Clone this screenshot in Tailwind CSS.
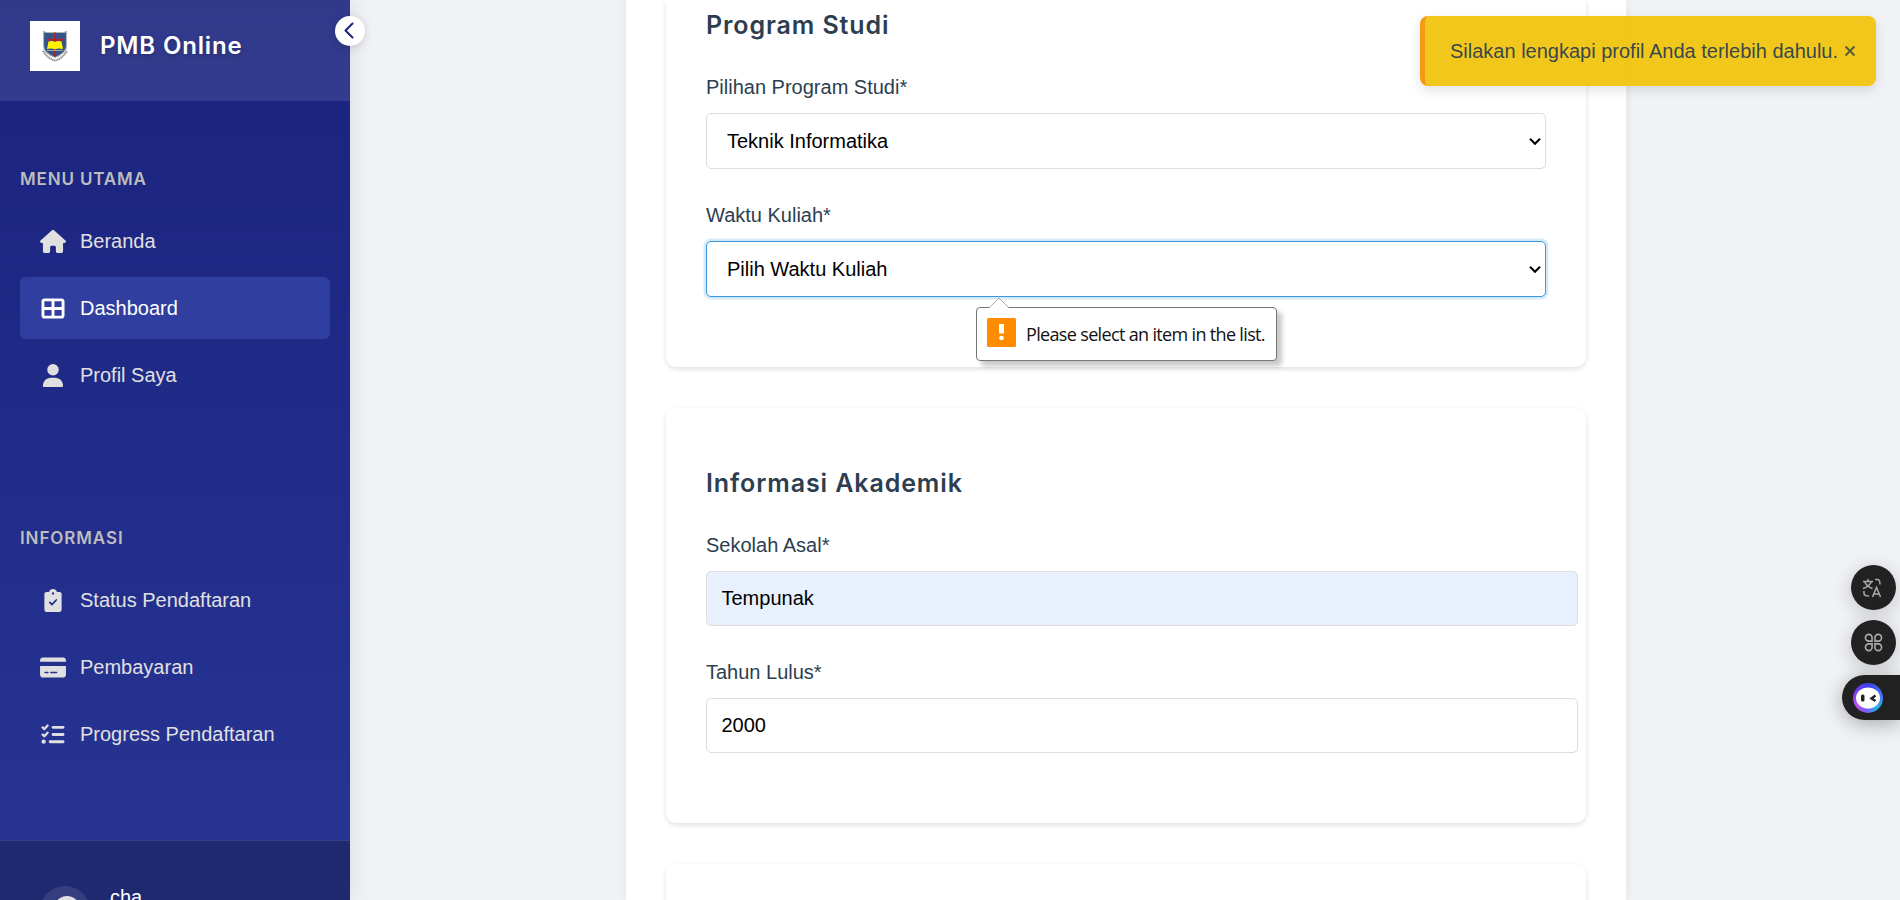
<!DOCTYPE html>
<html lang="id">
<head>
<meta charset="utf-8">
<title>PMB Online</title>
<script src="https://cdn.jsdelivr.net/npm/@tailwindcss/browser@4"></script>
</head>
<body class="relative flex h-[900px] w-[1900px] overflow-hidden bg-[#f0f2f5] font-['Liberation_Sans',Arial,sans-serif] text-[20px] leading-[30px] text-[#2c3e50]">

<aside class="relative z-10 flex h-[900px] w-[350px] shrink-0 flex-col bg-linear-to-b from-[#1a237e] to-[#283593] text-[#e0e0e0] shadow-[4px_0_20px_rgba(0,0,0,0.08)]">
  <div class="flex h-[101px] shrink-0 items-start gap-5 bg-white/10 pl-[30px] pt-[21px]">
    <svg class="size-[50px] shrink-0" viewBox="0 0 50 50">
      <rect width="50" height="50" fill="#fff"/>
      <path d="M13 30q5 8 12 9.500q7-1.500 12-9.500" fill="none" stroke="#888" stroke-width="1.800" stroke-dasharray="1.300 .5"/>
      <path d="M13.500 10.500l3 1h17l3-1v14.500c0 5-5 9-11.500 11.500c-6.500-2.500-11.500-6.500-11.500-11.500z" fill="#34558b" stroke="#b5b8b0" stroke-width="1.200"/>
      <path d="M25 11.500v24M17 18.800h16" stroke="#b3202c" stroke-width="2"/>
      <path d="M18.500 20.500q4-1 6.500.5q2.500-1.500 6.500-.5l1.500 7.500q-5-1-8 .5q-3-1.500-8-.5z" fill="#fff100"/>
      <path d="M17 29.500h16" stroke="#9aa49b" stroke-width="1"/>
    </svg>
    <div class="pt-[8px] font-[Inter] text-[24px] font-semibold leading-[34px] tracking-[0.850px] text-white [text-shadow:0_2px_4px_rgba(0,0,0,0.2)]">PMB Online</div>
  </div>
  <button class="absolute left-[335px] top-4 flex size-[30px] items-center justify-center rounded-full bg-white shadow-[0_2px_8px_rgba(0,0,0,0.15)]">
    <svg class="size-[30px]" viewBox="0 0 30 30" fill="none" stroke="#1a237e" stroke-width="2" stroke-linecap="round" stroke-linejoin="round"><path d="M17.500 7.500L10.500 14.500L17.500 21.500"/></svg>
  </button>

  <nav class="flex flex-col px-5">
    <h3 class="mt-[63px] h-[30px] font-[Inter] text-[17px] font-semibold tracking-[0.850px] text-[#bdbdbd]">MENU UTAMA</h3>
    <ul class="mt-[16px] flex flex-col gap-[5px]">
      <li class="flex h-[62px] items-center gap-[14px] rounded-[6px] pl-5"><svg class="h-[23px] w-[26px]" viewBox="0 0 576 512" fill="currentColor"><path d="M575.8 255.5c0 18-15 32.100-32 32.100h-32l.7 160.200c0 2.700-.2 5.400-.5 8.100V472c0 22.100-17.900 40-40 40H392c-22.100 0-40-17.900-40-40V384c0-17.700-14.300-32-32-32H256c-17.700 0-32 14.300-32 32v88c0 22.100-17.900 40-40 40H104c-22.100 0-40-17.900-40-40V287.600H32c-18 0-32-14-32-32.100c0-9 3-17 10-24L266.400 8c7-7 15-8 22-8s15 2 21 7L564.800 231.500c8 7 12 15 11 24z"/></svg>Beranda</li>
      <li class="flex h-[62px] items-center gap-[14px] rounded-[6px] bg-[#303f9f] pl-5 text-white"><svg class="h-[23px] w-[26px]" viewBox="0 0 512 512" fill="currentColor"><path d="M448 96V224H288V96H448zm0 192V416H288V288H448zM224 224H64V96H224V224zM64 288H224V416H64V288zM64 32C28.700 32 0 60.700 0 96V416c0 35.300 28.700 64 64 64H448c35.300 0 64-28.700 64-64V96c0-35.300-28.700-64-64-64H64z"/></svg>Dashboard</li>
      <li class="flex h-[62px] items-center gap-[14px] rounded-[6px] pl-5"><svg class="h-[23px] w-[26px]" viewBox="0 0 448 512" fill="currentColor"><path d="M224 256A128 128 0 1 0 224 0a128 128 0 1 0 0 256zm-45.700 48C79.800 304 0 383.800 0 482.300C0 498.700 13.300 512 29.700 512H418.300c16.400 0 29.700-13.300 29.700-29.700C448 383.800 368.200 304 269.700 304H178.300z"/></svg>Profil Saya</li>
    </ul>
    <h3 class="mt-[117px] h-[30px] font-[Inter] text-[17px] font-semibold tracking-[0.900px] text-[#bdbdbd]">INFORMASI</h3>
    <ul class="mt-[16px] flex flex-col gap-[5px]">
      <li class="flex h-[62px] items-center gap-[14px] rounded-[6px] pl-5"><svg class="h-[23px] w-[26px]" viewBox="0 0 384 512"><path fill="currentColor" fill-rule="evenodd" d="M48 64h55C113 26 150 0 192 0s79 26 89 64h55c27 0 48 21 48 48V464c0 27-21 48-48 48H48c-27 0-48-21-48-48V112C0 85 21 64 48 64zM192 72a26 26 0 1 0 0 52a26 26 0 1 0 0-52z"/><path d="M120 300l48 48l96-104" fill="none" stroke="#232f8b" stroke-width="38" stroke-linecap="round" stroke-linejoin="round"/></svg>Status Pendaftaran</li>
      <li class="flex h-[62px] items-center gap-[14px] rounded-[6px] pl-5"><svg class="h-[23px] w-[26px]" viewBox="0 0 576 512" fill="currentColor"><path d="M64 32C28.700 32 0 60.700 0 96v32H576V96c0-35.300-28.700-64-64-64H64zM576 224H0V416c0 35.300 28.700 64 64 64H512c35.300 0 64-28.700 64-64V224zM112 352h64c8.800 0 16 7.200 16 16s-7.200 16-16 16H112c-8.800 0-16-7.200-16-16s7.200-16 16-16zm112 16c0-8.800 7.200-16 16-16H368c8.800 0 16 7.200 16 16s-7.200 16-16 16H240c-8.800 0-16-7.200-16-16z"/></svg>Pembayaran</li>
      <li class="flex h-[62px] items-center gap-[14px] rounded-[6px] pl-5"><svg class="h-[23px] w-[26px]" viewBox="0 0 512 512" fill="none" stroke="currentColor" stroke-linecap="round" stroke-linejoin="round"><path d="M24 98l40 38L136 56M24 258l40 38L136 216" stroke-width="50"/><path d="M256 96H480M256 256H480M192 416H480" stroke-width="64"/><circle cx="48" cy="416" r="48" fill="currentColor" stroke="none"/></svg>Progress Pendaftaran</li>
    </ul>
  </nav>

  <div class="mt-auto flex h-[60px] shrink-0 gap-5 overflow-hidden border-t border-white/10 bg-[#1f2970] pl-10 pt-[45px]">
    <div class="flex size-[50px] shrink-0 justify-center rounded-full bg-white/10 pt-[10px]"><div class="ml-1 size-[26px] rounded-full bg-[#e0e0e0]"></div></div>
    <div class="-mt-[4px] text-white">cha</div>
  </div>
</aside>

<main class="ml-[276px] h-[900px] w-[1000px] shrink-0 overflow-hidden bg-white px-10 shadow-[0_0_10px_rgba(0,0,0,0.07)]">
  <section class="h-[367px] rounded-b-[10px] bg-white px-10 pt-[5px] shadow-[0_2px_5px_rgba(0,0,0,0.13)]">
    <h2 class="font-[Inter] text-[25px] font-semibold leading-[40px] tracking-[0.900px]">Program Studi</h2>
    <label class="mt-[27px] block">Pilihan Program Studi*</label>
    <div class="mt-[11px] flex h-14 w-[840px] items-center justify-between rounded-[5px] border border-[#ddd] bg-white pl-5 pr-1 text-black">Teknik Informatika<svg class="size-[12px]" viewBox="0 0 12 12" fill="none" stroke="#000" stroke-width="2"><path d="M1 3.800L6 8.800L11 3.800"/></svg></div>
    <label class="mt-[31px] block">Waktu Kuliah*</label>
    <div class="mt-[11px] flex h-14 w-[840px] items-center justify-between rounded-[5px] border border-[#3498db] bg-white pl-5 pr-1 text-black shadow-[0_0_0_2.500px_rgba(52,152,219,0.2)]">Pilih Waktu Kuliah<svg class="size-[12px]" viewBox="0 0 12 12" fill="none" stroke="#000" stroke-width="2"><path d="M1 3.800L6 8.800L11 3.800"/></svg></div>
  </section>
  <section class="mt-[41px] h-[415px] rounded-[10px] bg-white px-10 pt-[55px] shadow-[0_2px_5px_rgba(0,0,0,0.13)]">
    <h2 class="font-[Inter] text-[25px] font-semibold leading-[40px] tracking-[0.900px]">Informasi Akademik</h2>
    <label class="mt-[27px] block">Sekolah Asal*</label>
    <input class="mt-[11px] block h-[55px] w-[872px] rounded-[5px] border border-[#ddd] bg-[#e8f0fe] px-[14.500px] text-black" value="Tempunak">
    <label class="mt-[31px] block">Tahun Lulus*</label>
    <input class="mt-[11px] block h-[55px] w-[872px] rounded-[5px] border border-[#ddd] bg-white px-[14.500px] text-black" value="2000">
  </section>
  <section class="mt-[41px] h-[100px] rounded-[10px] bg-white shadow-[0_2px_5px_rgba(0,0,0,0.13)]"></section>
</main>

<div class="absolute left-[976px] top-[307px] flex h-[54px] w-[301px] items-start rounded-[4px] border border-[#767676] bg-white pl-[10px] pt-[10px] shadow-[5px_5px_5px_rgba(0,0,0,0.22)]">
  <svg class="absolute left-[11px] top-[-11px] h-[12px] w-[22px]" viewBox="0 0 22 12"><path d="M1 11L11 1L21 11V12H1z" fill="#fff"/><path d="M1 11L11 1L21 11" fill="none" stroke="#aaa"/></svg>
  <svg class="size-[29px] shrink-0" viewBox="0 0 29 29"><rect width="29" height="29" rx="1.500" fill="#ff8c00"/><path d="M12 6h5v9.500h-5z" fill="#fff"/><circle cx="14.500" cy="20" r="2.300" fill="#fff"/></svg>
  <span class="ml-[10px] mt-px whitespace-nowrap font-['Open_Sans'] text-[18px] leading-[30px] tracking-[-0.660px] text-[#111]">Please select an item in the list.</span>
</div>

<div class="absolute left-[1420px] top-4 flex h-[70px] w-[456px] items-center rounded-[8px] border-l-[5px] border-[#f39c12] bg-[#f1c40f]/95 pl-[25px] shadow-[0_4px_12px_rgba(0,0,0,0.12)]">
  <span class="whitespace-nowrap text-[#2c3e50]/95">Silakan lengkapi profil Anda terlebih dahulu.</span>
  <svg class="ml-[6px] size-[12px]" viewBox="0 0 12 12" stroke="#5a5d39" stroke-width="2"><path d="M1.500 1.500L10.500 10.500M10.500 1.500L1.500 10.500"/></svg>
</div>

<div class="absolute right-0 top-[565px] flex w-[58px] flex-col items-end gap-[10px]">
  <div class="mr-1 flex size-[45px] items-center justify-center rounded-full bg-[#212121] shadow-[0_4px_20px_rgba(0,0,0,0.2)]">
    <svg class="-ml-[3px] size-[20px]" viewBox="0 0 20 20" fill="none" stroke="#aaa" stroke-width="1.500"><path d="M1 3.500H11M6 1V3.500M2.500 3.500Q4.500 8.500 10.500 10.500M9.500 3.500Q7.500 8.500 1 10.500M13 1.500H15.500Q18 1.500 18 6.500M2 13V15.500Q2 18 7 18M10.500 19L14.500 9.500L18.500 19M12 16H17"/></svg>
  </div>
  <div class="mr-1 flex size-[45px] items-center justify-center rounded-full bg-[#212121] shadow-[0_4px_20px_rgba(0,0,0,0.2)]">
    <svg class="-ml-px size-[19px]" viewBox="0 0 20 20" fill="none" stroke="#aaa" stroke-width="1.700"><path d="M8.500 8.500H5A3.500 3.500 0 1 1 8.500 5zM11.500 8.500V5A3.500 3.500 0 1 1 15 8.500zM8.500 11.500V15A3.500 3.500 0 1 1 5 11.500zM11.500 11.500H15A3.500 3.500 0 1 1 11.500 15z"/></svg>
  </div>
  <div class="flex h-[45px] w-[58px] items-center rounded-l-full bg-[#212121] pl-[11px] shadow-[0_4px_20px_rgba(0,0,0,0.3)]">
    <div class="flex size-[30px] items-center justify-center rounded-full bg-[conic-gradient(#3b3fe8,#4b7df5_90deg,#22b8e8_135deg,#7a5cf0_190deg,#c04df0_240deg,#7a3cf0_290deg,#3b3fe8)]">
      <svg class="size-[24px]" viewBox="0 0 24 24"><ellipse cx="12" cy="12" rx="12" ry="10.500" fill="#fff"/><rect x="5" y="8.500" width="3.500" height="7" rx="1.500" fill="#222"/><path d="M19.500 9.500L15.500 12.500L19.500 15" fill="none" stroke="#222" stroke-width="2.400"/></svg>
    </div>
  </div>
</div>
</body>
</html>
